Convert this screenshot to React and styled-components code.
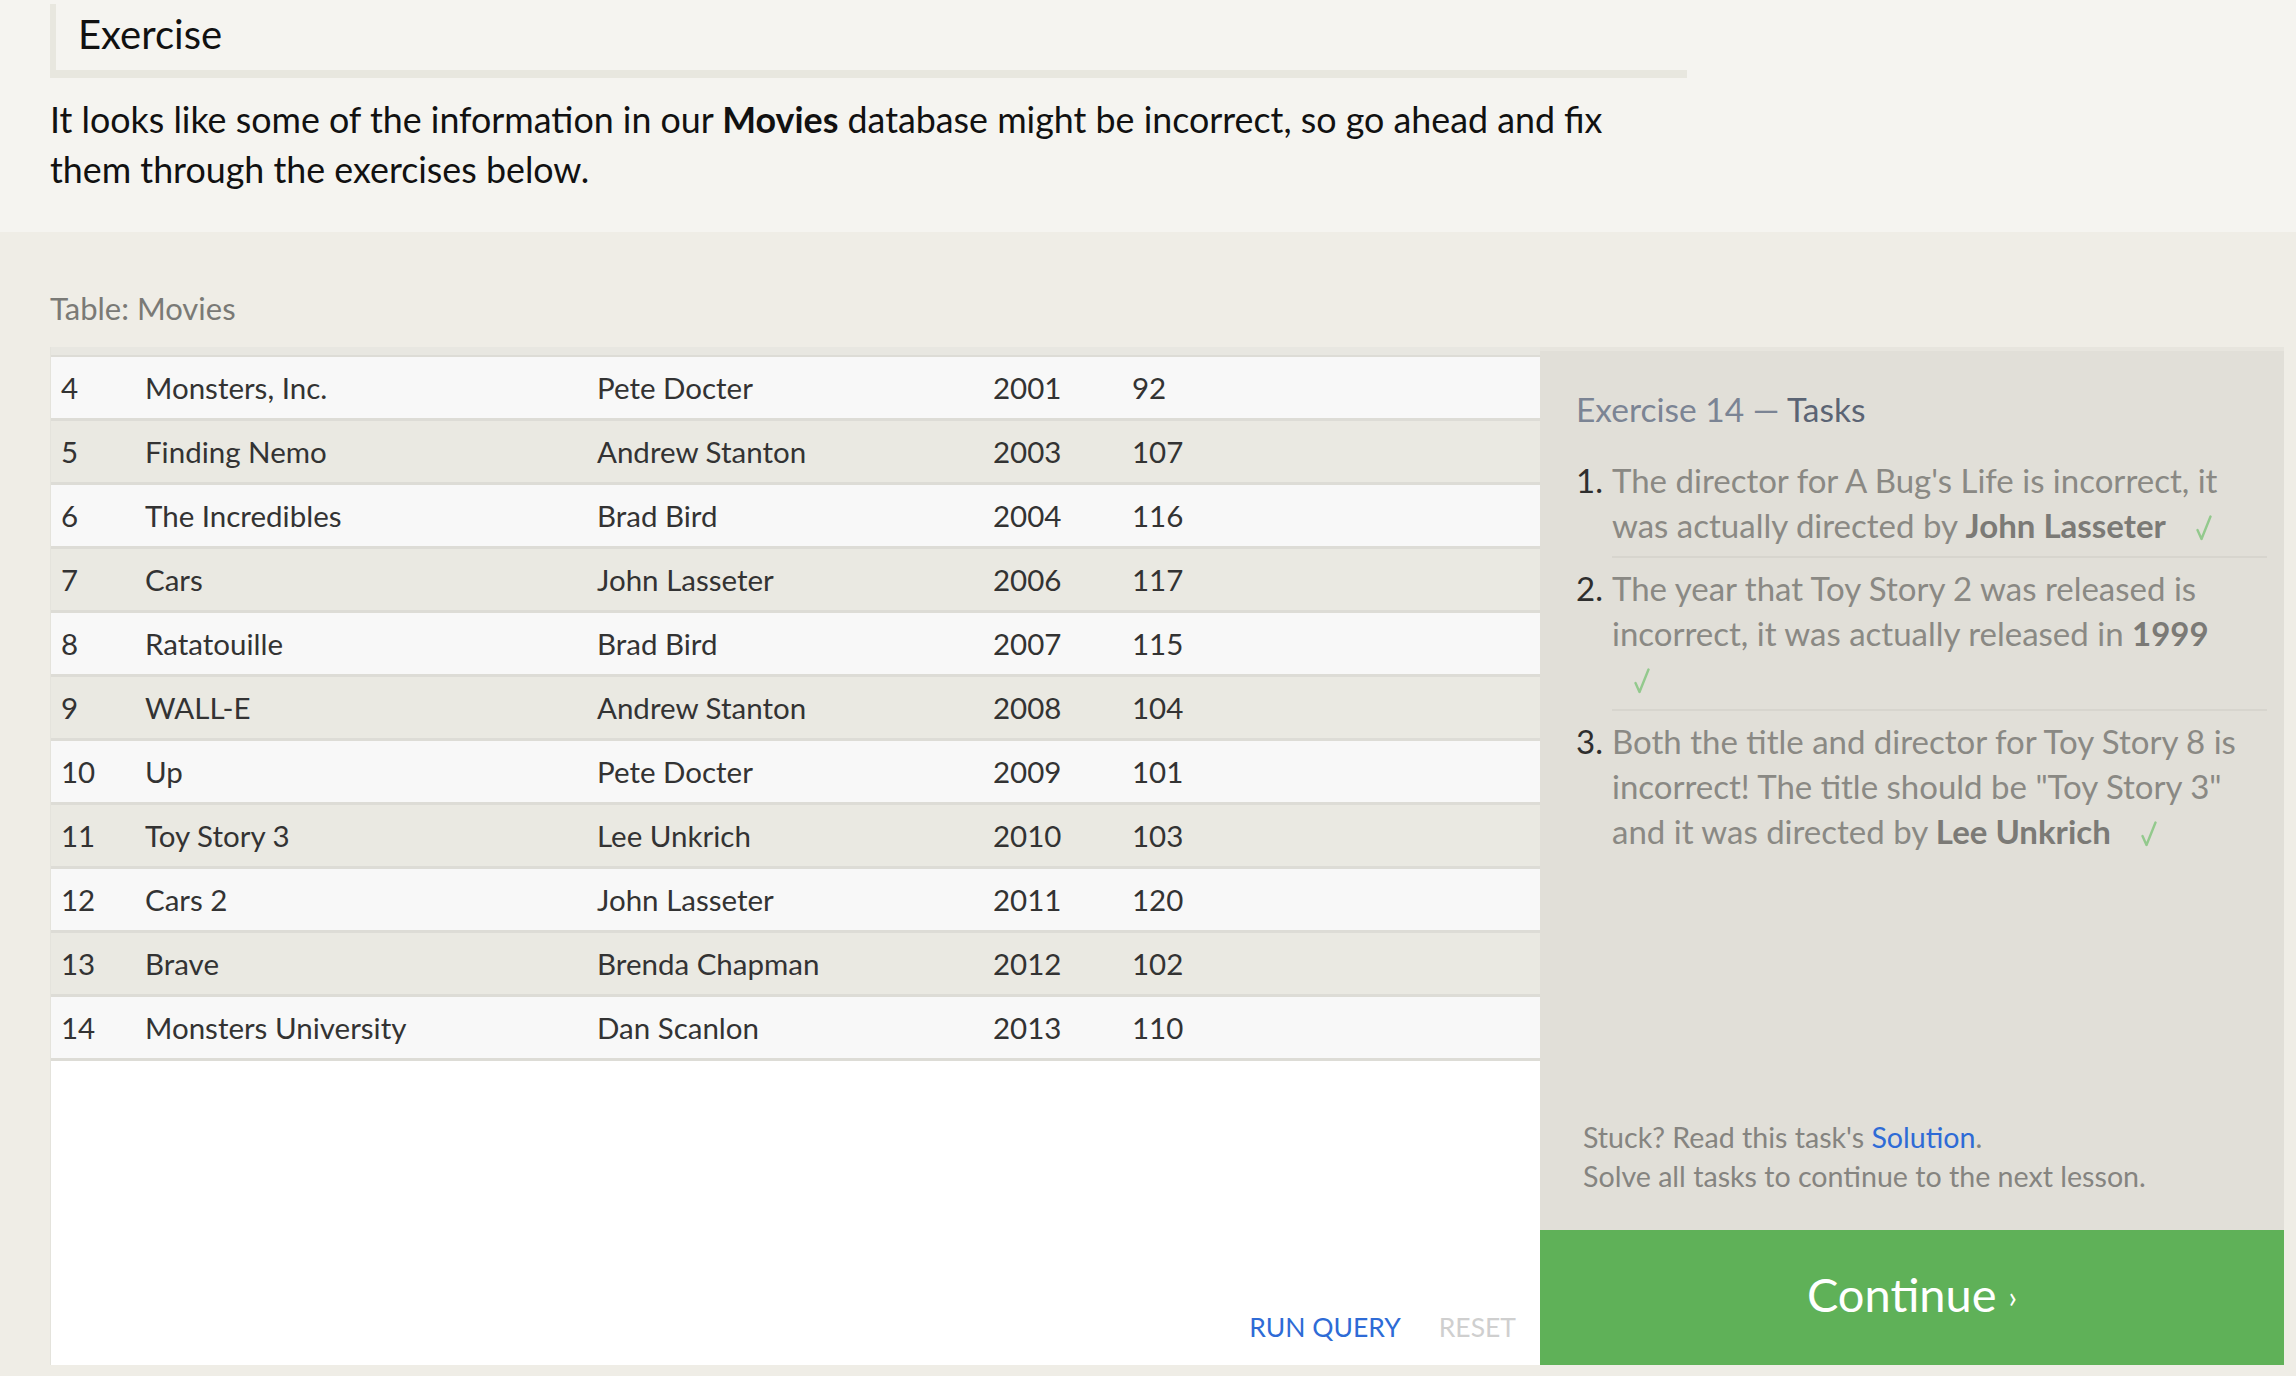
import React from "react";
import styled, { createGlobalStyle } from "styled-components";

const Global = createGlobalStyle`
  html, body { margin: 0; padding: 0; }
  body {
    background: #efede6;
    font-family: Lato, "Open Sans", sans-serif;
    color: #111;
  }
`;

const Page = styled.div`
  width: 2296px;
  min-height: 1376px;
  display: flex;
  flex-direction: column;
  background: #efede6;
`;

const Intro = styled.section`
  background: #f5f4f0;
  padding: 4px 0 37px 50px;
`;

const Heading = styled.h2`
  margin: 0;
  width: 1609px;
  padding: 4px 0 10px 22px;
  border-left: 6px solid #e8e7df;
  border-bottom: 8px solid #e8e7df;
  font-size: 40px;
  line-height: 52px;
  font-weight: 400;
  color: #111;
`;

const Lead = styled.p`
  margin: 17px 0 0;
  width: 1590px;
  font-size: 35.8px;
  line-height: 50px;
  color: #111;
  strong { font-weight: 700; }
`;

const Workspace = styled.section`
  padding: 58px 12px 11px 50px;
  display: flex;
  flex-direction: column;
`;

const TableLabel = styled.div`
  font-size: 31px;
  line-height: 36px;
  color: #7a7a76;
  margin-bottom: 21px;
`;

const Board = styled.div`
  display: grid;
  grid-template-columns: 1490px 744px;
  height: 1018px;
`;

const TablePane = styled.div`
  background: #fff;
  border-left: 1px solid #e4e3dc;
  display: flex;
  flex-direction: column;
`;

const HeaderStrip = styled.div`
  height: 8px;
  background: #e8e7e1;
  border-bottom: 2px solid #dddcd6;
`;

const Row = styled.div`
  display: grid;
  grid-template-columns: 84px 452px 396px 139px 1fr;
  align-items: center;
  height: 61px;
  padding-left: 10px;
  border-bottom: 3px solid #dddcd6;
  background: ${(p) => (p.$alt ? "#eae9e2" : "#f8f8f8")};
  font-size: 29.5px;
  color: #333;
`;

const Cell = styled.span`
  white-space: nowrap;
`;

const Filler = styled.div`
  flex: 1;
`;

const Actions = styled.div`
  display: flex;
  justify-content: flex-end;
  gap: 38px;
  padding: 0 24px 21px 0;
`;

const ActionButton = styled.span`
  font-size: 26.5px;
  line-height: 34px;
  color: ${(p) => (p.$muted ? "#cfcfcf" : "#2e6bd6")};
`;

const TaskPane = styled.aside`
  display: flex;
  flex-direction: column;
  background: #e1dfd8;
  border-top: 4px solid #e7e5de;
`;

const TaskBody = styled.div`
  flex: 1;
  display: flex;
  flex-direction: column;
  padding: 38px 17px 34px 36px;
`;

const TaskTitle = styled.h3`
  margin: 0;
  font-size: 33.5px;
  line-height: 40px;
  font-weight: 400;
  color: #7b8494;
  span { color: #5b6474; }
`;

const TaskList = styled.ol`
  list-style: none;
  margin: 21px 0 0;
  padding: 0;
`;

const TaskItem = styled.li`
  display: grid;
  grid-template-columns: 36px 1fr;
  font-size: 33px;
  line-height: 45px;
`;

const TaskNum = styled.span`
  color: #2e2e2e;
  padding-top: 8px;
`;

const TaskText = styled.div`
  color: #8a8984;
  padding: 8px 19px 8px 0;
  border-bottom: ${(p) => (p.$last ? "none" : "2px solid #d7d5ce")};
  b { font-weight: 700; color: #7b7a76; }
`;

const Check = styled.svg`
  display: inline-block;
  width: 16px;
  height: 26px;
  margin-left: 22px;
  vertical-align: -3px;
`;

const CheckMark = () => (
  <Check viewBox="0 0 16 26" aria-label="done">
    <polyline
      points="1.5,15 5.5,24 14.5,1.5"
      fill="none"
      stroke="#93c98d"
      strokeWidth="2.4"
      strokeLinecap="round"
      strokeLinejoin="round"
    />
  </Check>
);

const Help = styled.div`
  margin-top: auto;
  padding-left: 7px;
  font-size: 28.6px;
  line-height: 39px;
  color: #858480;
  a { color: #2e6bd6; text-decoration: none; }
`;

const ContinueButton = styled.button`
  height: 135px;
  border: none;
  padding: 0 0 8px;
  background: #5fb158;
  color: #fff;
  font-family: Lato, "Open Sans", sans-serif;
  font-size: 47px;
  display: flex;
  align-items: center;
  justify-content: center;
  gap: 12px;
  cursor: pointer;
`;

const Chevron = styled.span`
  font-size: 30px;
  padding-top: 4px;
`;

const movies = [
  [4, "Monsters, Inc.", "Pete Docter", 2001, 92],
  [5, "Finding Nemo", "Andrew Stanton", 2003, 107],
  [6, "The Incredibles", "Brad Bird", 2004, 116],
  [7, "Cars", "John Lasseter", 2006, 117],
  [8, "Ratatouille", "Brad Bird", 2007, 115],
  [9, "WALL-E", "Andrew Stanton", 2008, 104],
  [10, "Up", "Pete Docter", 2009, 101],
  [11, "Toy Story 3", "Lee Unkrich", 2010, 103],
  [12, "Cars 2", "John Lasseter", 2011, 120],
  [13, "Brave", "Brenda Chapman", 2012, 102],
  [14, "Monsters University", "Dan Scanlon", 2013, 110],
];

export default function App() {
  return (
    <Page>
      <Global />
      <Intro>
        <Heading>Exercise</Heading>
        <Lead>
          It looks like some of the information in our <strong>Movies</strong> database might be
          incorrect, so go ahead and fix them through the exercises below.
        </Lead>
      </Intro>
      <Workspace>
        <TableLabel>Table: Movies</TableLabel>
        <Board>
          <TablePane>
            <HeaderStrip />
            {movies.map((m, i) => (
              <Row key={m[0]} $alt={i % 2 === 1}>
                {m.map((v, j) => (
                  <Cell key={j}>{v}</Cell>
                ))}
              </Row>
            ))}
            <Filler />
            <Actions>
              <ActionButton>RUN QUERY</ActionButton>
              <ActionButton $muted>RESET</ActionButton>
            </Actions>
          </TablePane>
          <TaskPane>
            <TaskBody>
              <TaskTitle>
                Exercise 14 — <span>Tasks</span>
              </TaskTitle>
              <TaskList>
                <TaskItem>
                  <TaskNum>1.</TaskNum>
                  <TaskText>
                    The director for A Bug's Life is incorrect, it was actually directed by{" "}
                    <b>John Lasseter</b> <CheckMark />
                  </TaskText>
                </TaskItem>
                <TaskItem>
                  <TaskNum>2.</TaskNum>
                  <TaskText>
                    The year that Toy Story 2 was released is incorrect, it was actually released
                    in <b>1999</b> <CheckMark />
                  </TaskText>
                </TaskItem>
                <TaskItem>
                  <TaskNum>3.</TaskNum>
                  <TaskText $last>
                    Both the title and director for Toy Story 8 is incorrect! The title should be
                    "Toy Story 3" and it was directed by <b>Lee Unkrich</b> <CheckMark />
                  </TaskText>
                </TaskItem>
              </TaskList>
              <Help>
                Stuck? Read this task's <a href="#">Solution</a>.
                <br />
                Solve all tasks to continue to the next lesson.
              </Help>
            </TaskBody>
            <ContinueButton>
              Continue <Chevron>›</Chevron>
            </ContinueButton>
          </TaskPane>
        </Board>
      </Workspace>
    </Page>
  );
}
